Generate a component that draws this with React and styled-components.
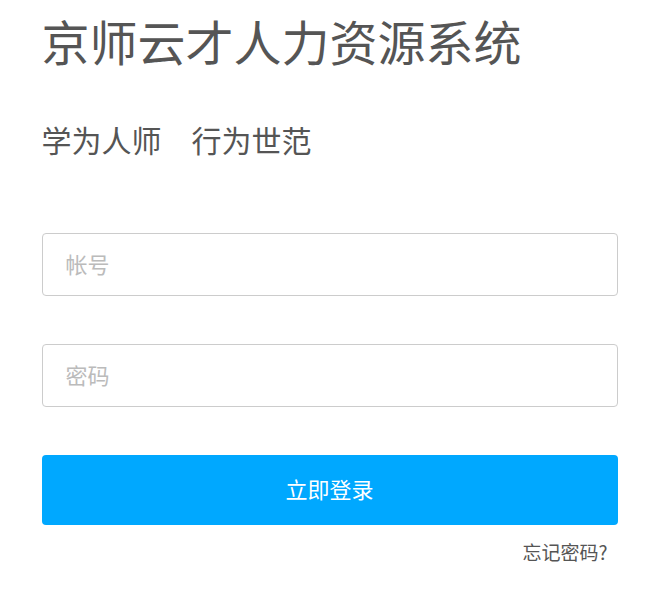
import React from 'react'
import styled, { createGlobalStyle } from 'styled-components'

const GlobalStyle = createGlobalStyle`
  body {
    margin: 0;
    background: #fff;
    font-family: "Noto Sans CJK SC", "Noto Sans", sans-serif;
  }
`

export default function App() {
  return (
    <>
      <GlobalStyle />
      <LoginStyled>
        <h1 className='title'>京师云才人力资源系统</h1>
        <p className='motto'>学为人师　行为世范</p>
        <Form onSubmit={(e) => e.preventDefault()}>
          <Field type='text' placeholder='帐号' />
          <Field type='password' placeholder='密码' />
          <SubmitButton type='submit'>立即登录</SubmitButton>
        </Form>
        <Forgot href='#'>忘记密码?</Forgot>
      </LoginStyled>
    </>
  )
}

const LoginStyled = styled.div`
  width: 576px;
  margin: 0 auto;
  display: flex;
  flex-direction: column;
  color: #555;

  .title{
    margin: 8px 0 0;
    font-size: 48px;
    font-weight: 400;
    line-height: 64px;
    color: #555;
  }
  .motto{
    margin: 45px 0 0;
    font-size: 30px;
    line-height: 44px;
    color: #555;
  }
`

const Form = styled.form`
  display: flex;
  flex-direction: column;
  gap: 48px;
  margin-top: 72px;
`

const Field = styled.input`
  box-sizing: border-box;
  height: 63px;
  width: 100%;
  padding: 0 23px 4px;
  border: 1px solid #ccc;
  border-radius: 4px;
  font-family: inherit;
  font-size: 22px;
  color: #555;
  outline: none;

  &::placeholder{
    color: #bbb;
  }
`

const SubmitButton = styled.button`
  height: 70px;
  padding: 0 0 5px;
  border: none;
  border-radius: 4px;
  background: #00a8ff;
  color: #fff;
  font-family: inherit;
  font-size: 22px;
  cursor: pointer;
`

const Forgot = styled.a`
  align-self: flex-end;
  margin: 13px 10px 0 0;
  font-size: 19px;
  line-height: 28px;
  color: #555;
  text-decoration: none;
`
